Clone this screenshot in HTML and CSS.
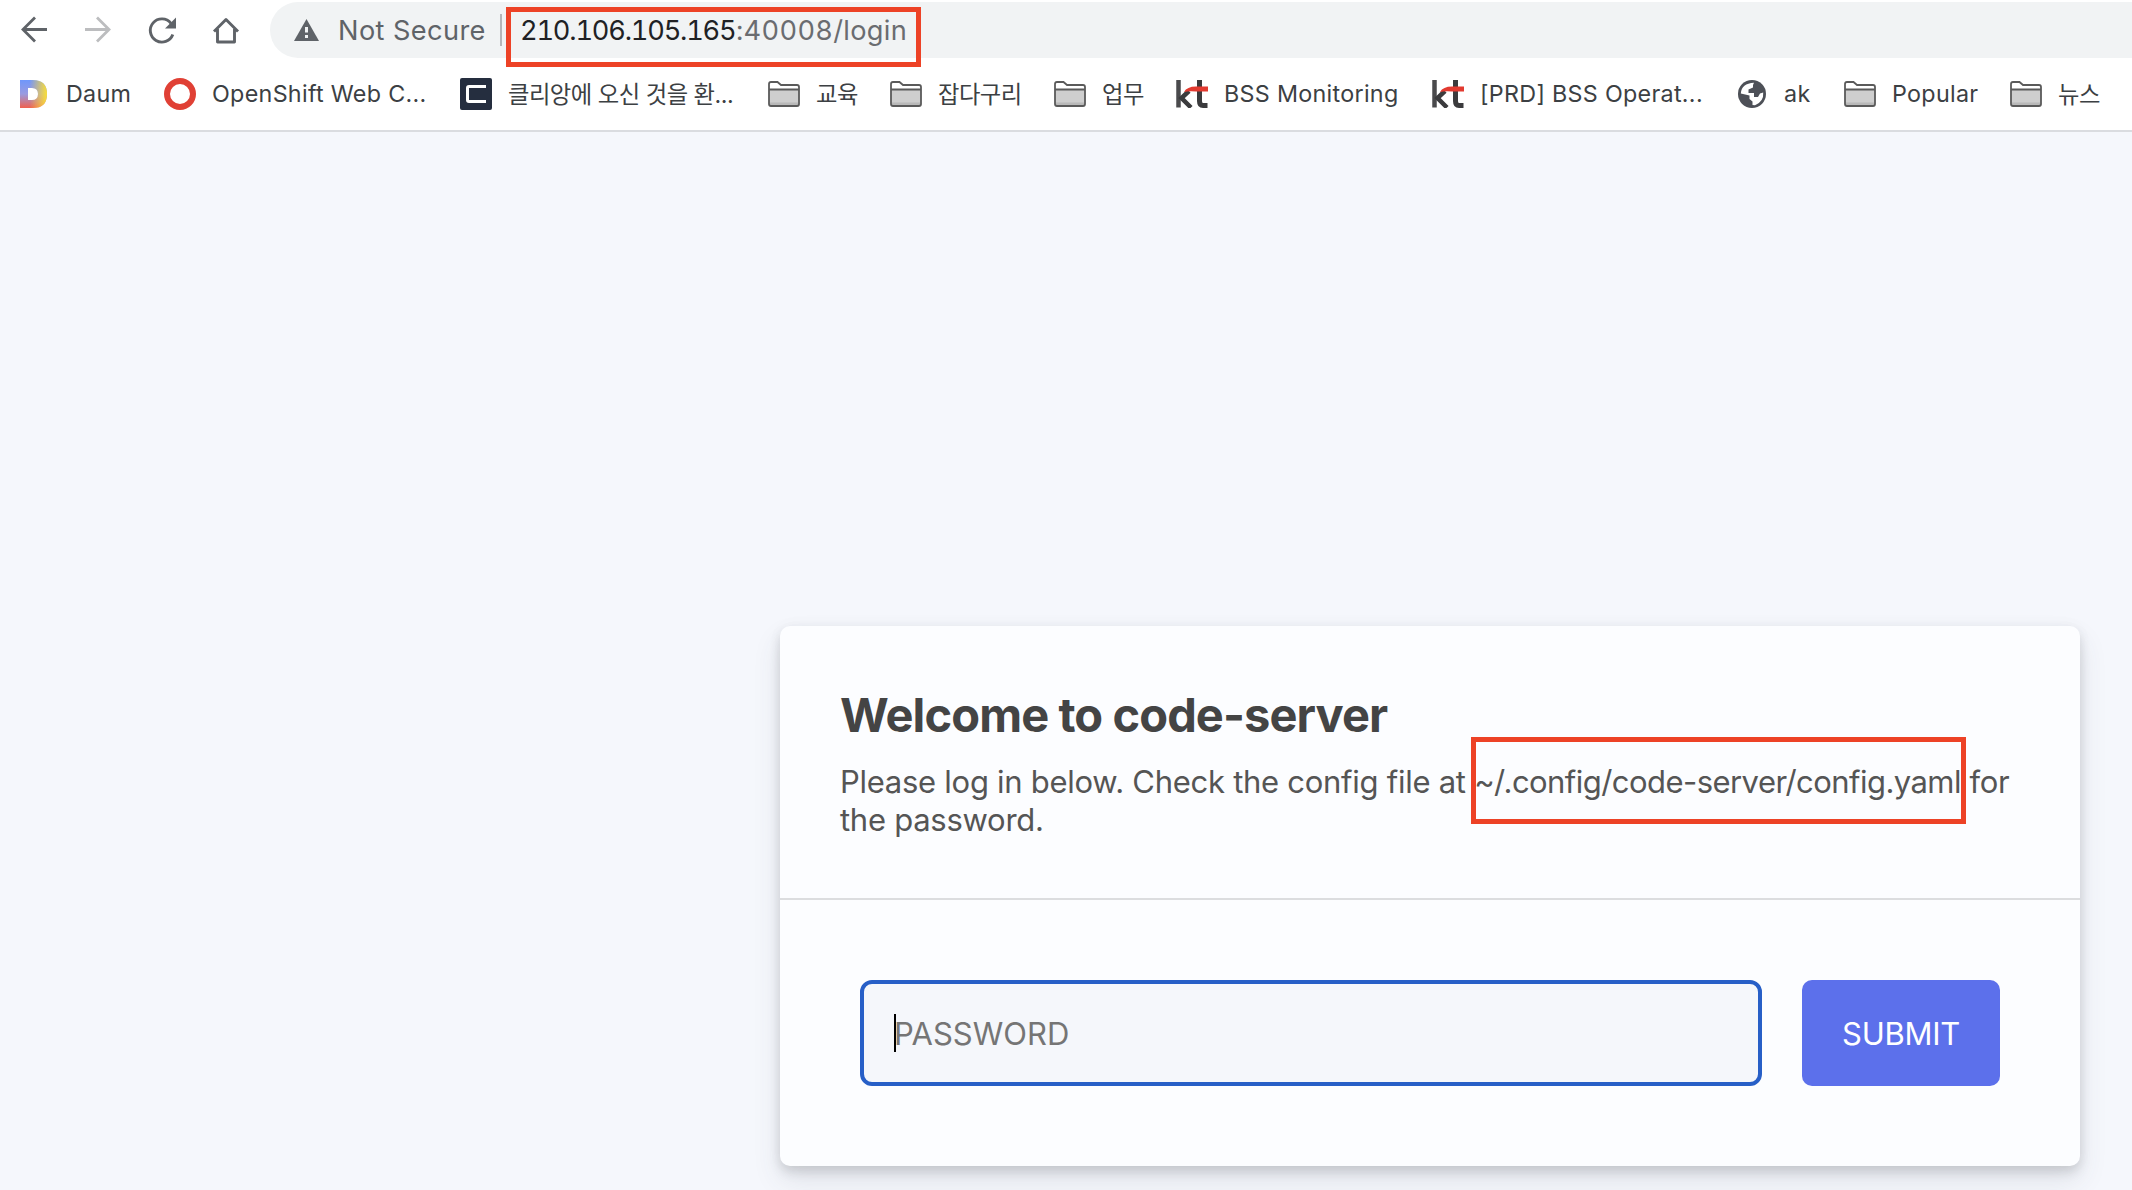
FILE: index.html
```html
<!DOCTYPE html>
<html lang="en">
<head>
<meta charset="utf-8">
<title>code-server login</title>
<link rel="stylesheet" href="styles.css">
</head>
<body>
<svg class="defs" aria-hidden="true">
  <symbol id="folder" viewBox="0 0 32 26">
    <path d="M1 3Q1 1 3 1H10L13.5 4.5H29Q31 4.5 31 6.5V8H1Z" fill="#fff"/>
    <path d="M1 8.5H31V23Q31 25 29 25H3Q1 25 1 23Z" fill="#cecece"/>
    <path d="M2 21.5H30V24H2Z" fill="#b9b9b9"/>
    <path d="M1 3Q1 1 3 1H9.500L13 4H29Q31 4 31 6V23Q31 25 29 25H3Q1 25 1 23ZM1 8.500H31" fill="none" stroke="#5a5a5a" stroke-width="1.8"/>
  </symbol>
  <symbol id="kt" viewBox="0 0 32 28">
    <path d="M2.500 0V27.500" fill="none" stroke="#4a4a4c" stroke-width="4.500"/>
    <path d="M13 11L5.500 18L15 27.500" fill="none" stroke="#3b3b3d" stroke-width="4.500"/>
    <path d="M23.500 0V21Q23.500 25.500 27 25.500H31.500" fill="none" stroke="#3b3b3d" stroke-width="5"/>
    <path d="M8 12Q11 6.500 20 6.500H32V11.500H20Q12 11 8 12Z" fill="#e23a30"/>
  </symbol>
</svg>
<header class="chrome">
  <div class="toolbar">
    <svg class="nav" viewBox="0 0 32 32"><path d="M29 15.500H5M17 3.500L5 15.500L17 27.500" fill="none" stroke="#5f6368" stroke-width="2.8"/></svg>
    <svg class="nav" viewBox="0 0 32 32"><path d="M3 15.500H27M15 3.500L27 15.500L15 27.500" fill="none" stroke="#bcbdbf" stroke-width="2.8"/></svg>
    <svg class="nav" viewBox="0 0 32 32"><path d="M26.800 20.500A11.600 11.600 0 1 1 25 9.300" fill="none" stroke="#5f6368" stroke-width="2.9"/><path d="M30 3.500V14.500H19Z" fill="#5f6368"/></svg>
    <svg class="nav" viewBox="0 0 32 32"><path d="M4 17.500L16 5.500L28 17.500M7.500 15V28H24.500V15" fill="none" stroke="#5f6368" stroke-width="2.900" stroke-linejoin="round"/></svg>
    <div class="omnibox">
      <svg class="warn" viewBox="0 0 25 22"><path d="M12.500 0L25 22H0Z" fill="#5f6368"/><path d="M11 8H14V13.500H11ZM11 16H14V19H11Z" fill="#f1f3f4"/></svg>
      <span class="insecure">Not Secure</span>
      <span class="sep"></span>
      <span class="url"><span class="host">210.106.105.165</span><span class="path">:40008/login</span><span class="mark mark-url"></span></span>
    </div>
  </div>
  <nav class="bookmarks">
    <a class="bm daum"><svg class="ico" viewBox="0 0 32 32">
      <defs><linearGradient id="d1" x1="0" y1="0" x2="0" y2="1"><stop offset="0" stop-color="#6f97fb"/><stop offset=".5" stop-color="#9a9be0"/><stop offset="1" stop-color="#f0604f"/></linearGradient>
      <linearGradient id="d2" x1="0" y1="0" x2="1" y2="0"><stop offset=".35" stop-color="#f8d040" stop-opacity="0"/><stop offset="1" stop-color="#f9df35"/></linearGradient></defs>
      <path d="M4 2H17Q31 2 31 16T17 30H4ZM12 10V22H16Q22 22 22 16T16 10Z" fill="url(#d1)" fill-rule="evenodd"/><path d="M4 2H17Q31 2 31 16T17 30H4ZM12 10V22H16Q22 22 22 16T16 10Z" fill="url(#d2)" fill-rule="evenodd"/></svg><span>Daum</span></a>
    <a class="bm"><svg class="ico" viewBox="0 0 32 32"><circle cx="16" cy="16" r="13" fill="none" stroke="#e04035" stroke-width="6"/></svg><span>OpenShift Web C...</span></a>
    <a class="bm"><svg class="ico" viewBox="0 0 32 32"><rect width="32" height="32" rx="2" fill="#252e3f"/><path d="M26 8.500H9Q7.500 8.500 7.500 10V22Q7.500 23.500 9 23.500H26" fill="none" stroke="#fff" stroke-width="3"/></svg><span class="ko">클리앙에 오신 것을 환...</span></a>
    <a class="bm"><svg class="ico fold"><use href="#folder"/></svg><span class="ko">교육</span></a>
    <a class="bm"><svg class="ico fold"><use href="#folder"/></svg><span class="ko">잡다구리</span></a>
    <a class="bm"><svg class="ico fold"><use href="#folder"/></svg><span class="ko">업무</span></a>
    <a class="bm"><svg class="ico kt"><use href="#kt"/></svg><span>BSS Monitoring</span></a>
    <a class="bm"><svg class="ico kt"><use href="#kt"/></svg><span>[PRD] BSS Operat...</span></a>
    <a class="bm"><svg class="ico" viewBox="0 0 32 32"><circle cx="16" cy="16" r="14" fill="#4d5057"/><path d="M18 4.800L17 7V9.500L12.500 11.500V15H18V19H22L24 15.500L27.200 14.500Q28 23.500 19 27.200L16.500 27V23.500L13.500 21V17.500L4.800 15.500Q5.500 5.500 18 4.800Z" fill="#fff"/></svg><span>ak</span></a>
    <a class="bm"><svg class="ico fold"><use href="#folder"/></svg><span>Popular</span></a>
    <a class="bm"><svg class="ico fold"><use href="#folder"/></svg><span class="ko">뉴스</span></a>
  </nav>
</header>
<main class="page">
  <section class="card">
    <div class="intro">
      <h1>Welcome to code-server</h1>
      <p>Please log in below. Check the config file at <span class="cfg">~/.config/code-server/config.yaml<span class="mark mark-cfg"></span></span> for the password.</p>
    </div>
    <form class="login">
      <div class="field"><input type="password" placeholder="PASSWORD"><span class="caret"></span></div>
      <button type="button">SUBMIT</button>
    </form>
  </section>
</main>
</body>
</html>
```
FILE: styles.css
```css
* { box-sizing: border-box; }
body {
  margin: 0;
  height: 1190px;
  display: flex;
  flex-direction: column;
  overflow: hidden;
  background: #f5f7fc;
  font-family: Inter, "Noto Sans CJK KR", sans-serif;
}
.defs { position: absolute; width: 0; height: 0; }
.chrome { height: 132px; background: #fff; border-bottom: 2px solid #dadce0; flex: none; }
.toolbar { display: flex; align-items: center; height: 60px; padding-left: 18px; }
.nav { width: 32px; height: 32px; margin-right: 32px; flex: none; }
.nav:nth-child(4) { margin-right: 28px; }
.omnibox {
  flex: 1;
  height: 56px;
  display: flex;
  align-items: center;
  padding-left: 24px;
  background: #f1f3f4;
  border-radius: 28px 0 0 28px;
  font-size: 27.2px;
  line-height: 56px;
  white-space: nowrap;
}
.warn { width: 25px; height: 22px; flex: none; }
.insecure { width: 162px; margin-left: 19px; padding-top: 1px; color: #5f6368; letter-spacing: .4px; }
.sep { width: 2px; height: 32px; background: #b4b6b9; }
.url { position: relative; margin-left: 18px; color: #6a6c70; display: flex; }
.host, .path { padding-top: 1px; font-feature-settings: "tnum"; }
.host { width: 216px; color: #202124; letter-spacing: -1.2px; }
.path { letter-spacing: .3px; }
.mark { position: absolute; border: 5px solid #ed4226; }
.mark-url { left: -14px; top: 5px; width: 415px; height: 60px; }
.bookmarks {
  display: grid;
  grid-template-columns: 148px 296px 308px 122px 164px 122px 256px 304px 108px 166px auto;
  height: 70px;
  padding: 0 0 2px 16px;
  color: #3c4043;
  font-size: 23.3px;
  letter-spacing: .3px;
  white-space: nowrap;
}
.bm { display: flex; align-items: center; gap: 16px; }
.bm span { padding-bottom: 2px; }
.daum { gap: 18px; }
.ico { width: 32px; height: 32px; flex: none; }
.fold { height: 26px; }
.kt { height: 28px; }
.ko { letter-spacing: -.5px; }
.page { flex: 1; padding: 494px 0 0 780px; }
.card {
  width: 1300px;
  height: 540px;
  background: #fcfdff;
  border-radius: 10px;
  box-shadow: 0 14px 28px rgba(60, 66, 87, .118), 0 6px 12px rgba(0, 0, 0, .118), 0 0 16px rgba(0, 0, 0, .03);
}
.intro { height: 274px; padding: 58px 60px 0; border-bottom: 2px solid #dcdddf; }
h1 { margin: 0; font-size: 47px; line-height: 62px; letter-spacing: -.9px; color: #444; }
p { margin: 17px 0 0; font-size: 31px; line-height: 38px; letter-spacing: -.27px; color: #555; }
.cfg { position: relative; white-space: nowrap; letter-spacing: -.55px; }
.mark-cfg { left: -3px; top: -26px; width: 495px; height: 87px; }
.login { display: flex; gap: 40px; padding: 80px 80px; }
.field { position: relative; width: 902px; height: 106px; }
input {
  width: 100%;
  height: 100%;
  padding: 0 30px;
  border: 4px solid #275fc7;
  border-radius: 12px;
  background: #f5f7fb;
  font: 31px Inter, sans-serif;
  outline: none;
}
input::placeholder { color: #757575; opacity: 1; }
.caret { position: absolute; left: 34px; top: 34px; width: 2px; height: 38px; background: #000; }
button {
  width: 198px;
  height: 106px;
  border: 0;
  border-radius: 10px;
  background: #5c70eb;
  color: #fff;
  font: 31px Inter, sans-serif;
  letter-spacing: -.3px;
}
```
